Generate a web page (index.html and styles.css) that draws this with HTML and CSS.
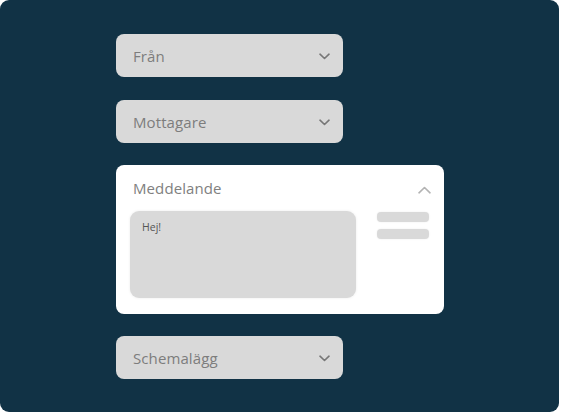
FILE: index.html
```html
<!DOCTYPE html>
<html lang="sv">
<head>
<meta charset="utf-8">
<title>Meddelande</title>
<link rel="stylesheet" href="styles.css">
</head>
<body>
<div class="panel">
  <div class="stack">
    <div class="field">
      <span class="label">Från</span>
      <svg class="chev" width="11" height="7" viewBox="0 0 11 7"><path d="M1 1.2l4.5 4.3 4.5-4.3" fill="none" stroke="#777" stroke-width="1.6" stroke-linecap="round" stroke-linejoin="round"/></svg>
    </div>
    <div class="field">
      <span class="label">Mottagare</span>
      <svg class="chev" width="11" height="7" viewBox="0 0 11 7"><path d="M1 1.2l4.5 4.3 4.5-4.3" fill="none" stroke="#777" stroke-width="1.6" stroke-linecap="round" stroke-linejoin="round"/></svg>
    </div>
    <div class="card">
      <div class="card-head">
        <span class="label">Meddelande</span>
        <svg class="chev-up" width="13" height="8" viewBox="0 0 13 8"><path d="M1 6.8l5.5-5.3 5.5 5.3" fill="none" stroke="#b3b3b3" stroke-width="1.6" stroke-linecap="round" stroke-linejoin="round"/></svg>
      </div>
      <div class="card-body">
        <div class="textarea">Hej!</div>
        <div class="bars">
          <div class="bar"></div>
          <div class="bar"></div>
        </div>
      </div>
    </div>
    <div class="field">
      <span class="label">Schemalägg</span>
      <svg class="chev" width="11" height="7" viewBox="0 0 11 7"><path d="M1 1.2l4.5 4.3 4.5-4.3" fill="none" stroke="#777" stroke-width="1.6" stroke-linecap="round" stroke-linejoin="round"/></svg>
    </div>
  </div>
</div>
</body>
</html>
```
FILE: styles.css
```css
* { box-sizing: border-box; }
html, body { margin: 0; padding: 0; background: #ffffff; }
body { font-family: "Open Sans", "Noto Sans", sans-serif; }

.panel {
  width: 559px;
  height: 412px;
  background: #113245;
  border-radius: 9px;
  padding: 34px 0 0 116px;
}

.stack {
  display: flex;
  flex-direction: column;
  align-items: flex-start;
}

.field {
  width: 227px;
  height: 43px;
  background: #d9d9d9;
  border-radius: 8px;
  display: flex;
  align-items: center;
  justify-content: space-between;
  padding: 0 13px 0 17px;
}
.field + .field, .field + .card, .card + .field { margin-top: 22px; }
.field:first-child + .field { margin-top: 23px; }

.label {
  font-size: 15px;
  color: #7d7d7d;
  letter-spacing: 0.1px;
}

.chev { display: block; margin-top: 2px; }

.card {
  width: 328px;
  height: 149px;
  background: #ffffff;
  border-radius: 8px;
  padding: 0 15px 16px 14px;
  display: flex;
  flex-direction: column;
}

.card-head {
  height: 46px;
  display: flex;
  align-items: center;
  justify-content: space-between;
  padding: 0 0 0 3px;
}
.card-head .label { color: #808080; margin-top: 0px; }
.chev-up { display: block; margin-right: -2px; margin-top: 4px; }

.card-body {
  flex: 1;
  display: flex;
  gap: 21px;
}

.textarea {
  width: 226px;
  height: 87px;
  background: #d9d9d9;
  border-radius: 9px;
  box-shadow: 0 0 3px rgba(0,0,0,0.08);
  padding: 9px 12px;
  font-size: 10.5px;
  color: #555555;
  line-height: 14px;
}

.bars {
  flex: 1;
  display: flex;
  flex-direction: column;
  gap: 7px;
  padding-top: 1px;
}

.bar {
  height: 10px;
  background: #d9d9d9;
  border-radius: 4px;
  box-shadow: 0 0 2px rgba(0,0,0,0.08);
}
```
